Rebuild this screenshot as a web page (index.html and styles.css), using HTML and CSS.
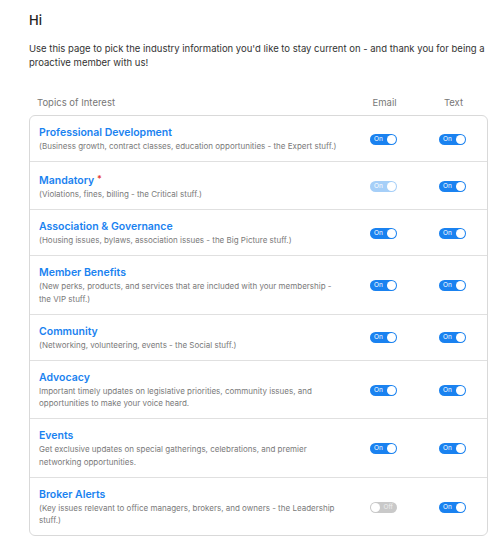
FILE: index.html
```html
<!DOCTYPE html>
<html lang="en">
<head>
<meta charset="utf-8">
<title>Topics of Interest</title>
<link rel="stylesheet" href="styles.css">
</head>
<body>
<main class="page">
  <h1 class="greeting">Hi</h1>
  <p class="intro">Use this page to pick the industry information you'd like to stay current on - and thank you for being a proactive member with us!</p>

  <div class="table-head">
    <span class="th-topic">Topics of Interest</span>
    <span class="th-col">Email</span>
    <span class="th-col">Text</span>
  </div>

  <div class="card">
    <div class="row">
      <div class="topic">
        <div class="title">Professional Development</div>
        <div class="desc">(Business growth, contract classes, education opportunities - the Expert stuff.)</div>
      </div>
      <div class="cell"><span class="toggle on"><span class="lbl">On</span><span class="knob"></span></span></div>
      <div class="cell"><span class="toggle on"><span class="lbl">On</span><span class="knob"></span></span></div>
    </div>
    <div class="row">
      <div class="topic">
        <div class="title">Mandatory <span class="req">*</span></div>
        <div class="desc">(Violations, fines, billing - the Critical stuff.)</div>
      </div>
      <div class="cell"><span class="toggle on disabled"><span class="lbl">On</span><span class="knob"></span></span></div>
      <div class="cell"><span class="toggle on"><span class="lbl">On</span><span class="knob"></span></span></div>
    </div>
    <div class="row">
      <div class="topic">
        <div class="title">Association &amp; Governance</div>
        <div class="desc">(Housing issues, bylaws, association issues - the Big Picture stuff.)</div>
      </div>
      <div class="cell"><span class="toggle on"><span class="lbl">On</span><span class="knob"></span></span></div>
      <div class="cell"><span class="toggle on"><span class="lbl">On</span><span class="knob"></span></span></div>
    </div>
    <div class="row">
      <div class="topic">
        <div class="title">Member Benefits</div>
        <div class="desc">(New perks, products, and services that are included with your membership - the VIP stuff.)</div>
      </div>
      <div class="cell"><span class="toggle on"><span class="lbl">On</span><span class="knob"></span></span></div>
      <div class="cell"><span class="toggle on"><span class="lbl">On</span><span class="knob"></span></span></div>
    </div>
    <div class="row">
      <div class="topic">
        <div class="title">Community</div>
        <div class="desc">(Networking, volunteering, events - the Social stuff.)</div>
      </div>
      <div class="cell"><span class="toggle on"><span class="lbl">On</span><span class="knob"></span></span></div>
      <div class="cell"><span class="toggle on"><span class="lbl">On</span><span class="knob"></span></span></div>
    </div>
    <div class="row">
      <div class="topic">
        <div class="title">Advocacy</div>
        <div class="desc">Important timely updates on legislative priorities, community issues, and opportunities to make your voice heard.</div>
      </div>
      <div class="cell"><span class="toggle on"><span class="lbl">On</span><span class="knob"></span></span></div>
      <div class="cell"><span class="toggle on"><span class="lbl">On</span><span class="knob"></span></span></div>
    </div>
    <div class="row">
      <div class="topic">
        <div class="title">Events</div>
        <div class="desc">Get exclusive updates on special gatherings, celebrations, and premier networking opportunities.</div>
      </div>
      <div class="cell"><span class="toggle on"><span class="lbl">On</span><span class="knob"></span></span></div>
      <div class="cell"><span class="toggle on"><span class="lbl">On</span><span class="knob"></span></span></div>
    </div>
    <div class="row">
      <div class="topic">
        <div class="title">Broker Alerts</div>
        <div class="desc">(Key issues relevant to office managers, brokers, and owners - the Leadership stuff.)</div>
      </div>
      <div class="cell"><span class="toggle off"><span class="knob"></span><span class="lbl">Off</span></span></div>
      <div class="cell"><span class="toggle on"><span class="lbl">On</span><span class="knob"></span></span></div>
    </div>
  </div>
</main>
</body>
</html>
```

FILE: styles.css
```css
* { box-sizing: border-box; }

body {
  margin: 0;
  background: #ffffff;
  font-family: Inter, "Open Sans", "Liberation Sans", sans-serif;
  color: #333333;
}

.page {
  padding: 12px 12px 0 29px;
}

.greeting {
  margin: 0;
  font-size: 13px;
  line-height: 16px;
  font-weight: 500;
  color: #222222;
}

.intro {
  margin: 14px 0 0;
  font-size: 9.5px;
  line-height: 14px;
  color: #333333;
}

.table-head {
  display: grid;
  grid-template-columns: 1fr 69px 69px;
  margin-top: 26px;
  padding-left: 8px;
  font-size: 9.5px;
  line-height: 14px;
  color: #777777;
}

.th-col { text-align: center; }

.card {
  margin-top: 5px;
  border: 1px solid #d9d9d9;
  border-radius: 6px;
}

.row {
  display: grid;
  grid-template-columns: 1fr 69px 69px;
  align-items: center;
  padding: 10px 0 8.5px 9px;
}

.row + .row { border-top: 1px solid #e0e0e0; }

.topic { padding-right: 4px; }

.title {
  font-size: 10.5px;
  line-height: 14px;
  font-weight: 600;
  color: #1a82f0;
}

.req { color: #e53935; font-size: 9px; vertical-align: 2px; }

.desc {
  font-size: 8px;
  line-height: 12.5px;
  color: #7a7a7a;
}

.cell {
  display: flex;
  justify-content: center;
}

.toggle {
  display: flex;
  align-items: center;
  justify-content: space-between;
  width: 27px;
  height: 11px;
  border-radius: 6px;
  padding: 0 1px 0 4px;
  background: #1a82f0;
}

.toggle.disabled { background: #a6cff8; }

.toggle.off {
  background: #c9c9c9;
  padding: 0 4px 0 1px;
}

.lbl {
  font-size: 6.5px;
  line-height: 11px;
  color: #ffffff;
}

.toggle.off .lbl { color: #eeeeee; }

.knob {
  width: 9px;
  height: 9px;
  border-radius: 50%;
  background: #ffffff;
}
```
